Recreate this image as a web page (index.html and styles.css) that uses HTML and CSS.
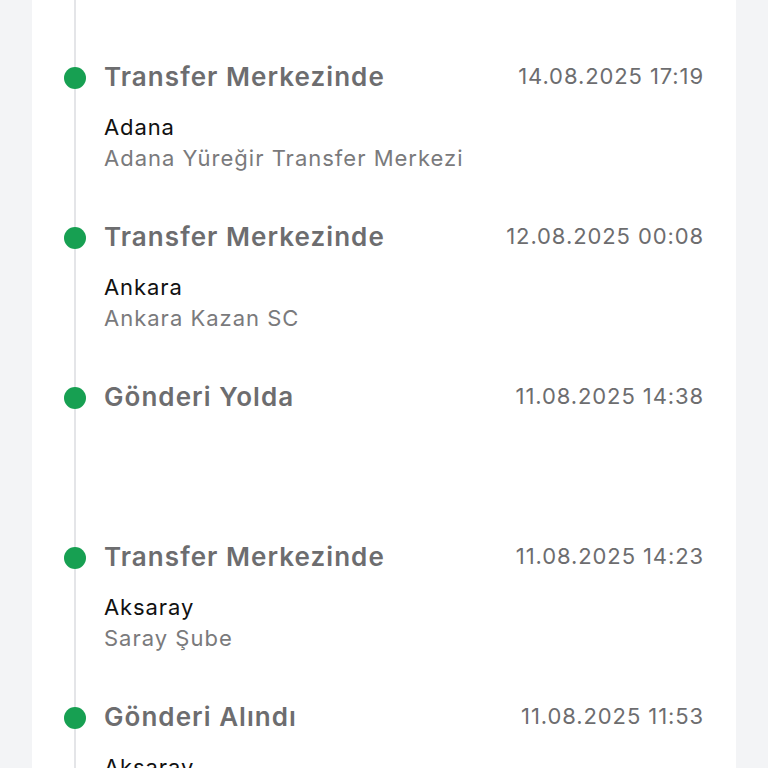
FILE: index.html
```html
<!DOCTYPE html>
<html lang="tr">
<head>
  <meta charset="UTF-8">
  <meta name="viewport" content="width=device-width, initial-scale=1">
  <title>Gönderi Hareketleri</title>
  <link rel="stylesheet" href="styles.css">
</head>
<body>

  <div class="card">
    <ul class="timeline">
      <li class="step">
        <span class="dot"></span>
        <div class="step-head">
          <h3 class="step-title">Transfer Merkezinde</h3>
          <span class="step-date">14.08.2025 17:19</span>
        </div>
        <p class="step-city">Adana</p>
        <p class="step-branch">Adana Yüreğir Transfer Merkezi</p>
      </li>
      <li class="step">
        <span class="dot"></span>
        <div class="step-head">
          <h3 class="step-title">Transfer Merkezinde</h3>
          <span class="step-date">12.08.2025 00:08</span>
        </div>
        <p class="step-city">Ankara</p>
        <p class="step-branch">Ankara Kazan SC</p>
      </li>
      <li class="step">
        <span class="dot"></span>
        <div class="step-head">
          <h3 class="step-title">Gönderi Yolda</h3>
          <span class="step-date">11.08.2025 14:38</span>
        </div>
      </li>
      <li class="step">
        <span class="dot"></span>
        <div class="step-head">
          <h3 class="step-title">Transfer Merkezinde</h3>
          <span class="step-date">11.08.2025 14:23</span>
        </div>
        <p class="step-city">Aksaray</p>
        <p class="step-branch">Saray Şube</p>
      </li>
      <li class="step">
        <span class="dot"></span>
        <div class="step-head">
          <h3 class="step-title">Gönderi Alındı</h3>
          <span class="step-date">11.08.2025 11:53</span>
        </div>
        <p class="step-city">Aksaray</p>
        <p class="step-branch">Saray Şube</p>
      </li>
    </ul>
  </div>

</body>
</html>
```

FILE: styles.css
```css
body {
  font-family: Inter, 'Noto Sans', sans-serif;
  background-color: #f3f4f6;
  margin: 0;
  padding: 0;
  height: 100vh;
  overflow: hidden;
}

.card {
  background-color: #ffffff;
  margin: 0 32px;
  padding: 0 32px 0 0;
  min-height: 100vh;
}

.timeline {
  list-style: none;
  margin: 0 0 0 42px;
  padding: 45px 0 0 0;
  border-left: 2px solid #e4e5e8;
}

.step {
  position: relative;
  box-sizing: border-box;
  height: 160px;
  padding: 16px 0 0 28px;
}

.dot {
  position: absolute;
  left: -12px;
  top: 22px;
  width: 22px;
  height: 22px;
  border-radius: 50%;
  background-color: #17a052;
}

.step-head {
  display: flex;
  justify-content: space-between;
  align-items: flex-start;
}

.step-title {
  margin: 0;
  font-size: 26px;
  line-height: 32px;
  font-weight: 600;
  letter-spacing: 1.05px;
  color: #6d6d6f;
}

.step-date {
  margin-top: 1px;
  font-size: 22px;
  line-height: 28px;
  letter-spacing: 0.9px;
  color: #6d6d6f;
}

.step-city {
  margin: 19px 0 0;
  font-size: 22px;
  line-height: 31px;
  letter-spacing: 0.9px;
  color: #111111;
}

.step-branch {
  margin: 0;
  font-size: 22px;
  line-height: 31px;
  letter-spacing: 1px;
  color: #7a7a7c;
}
```
